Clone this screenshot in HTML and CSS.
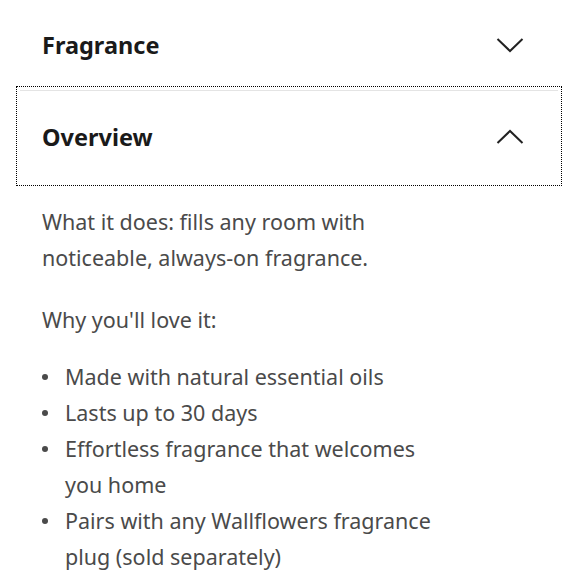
FILE: index.html
```html
<!DOCTYPE html>
<html lang="en">
<head>
<meta charset="utf-8">
<link rel="stylesheet" href="styles.css">
</head>
<body>
<div class="accordion">
  <div class="item">
    <div class="header">
      <span class="title">Fragrance</span>
      <svg class="chev" width="28" height="16" viewBox="0 0 28 16"><polyline points="1.5,2 14,14 26.5,2" fill="none" stroke="#222" stroke-width="2"/></svg>
    </div>
  </div>
  <div class="item focused">
    <div class="header">
      <span class="title">Overview</span>
      <svg class="chev" width="28" height="16" viewBox="0 0 28 16"><polyline points="1.5,14 14,2 26.5,14" fill="none" stroke="#222" stroke-width="2"/></svg>
    </div>
  </div>
  <div class="content">
    <p>What it does: fills any room with noticeable, always-on fragrance.</p>
    <p class="p2">Why you'll love it:</p>
    <ul class="list">
      <li>Made with natural essential oils</li>
      <li>Lasts up to 30 days</li>
      <li>Effortless fragrance that welcomes you home</li>
      <li>Pairs with any Wallflowers fragrance plug (sold separately)</li>
    </ul>
  </div>
</div>
</body>
</html>
```
FILE: styles.css
```css
html, body {
  margin: 0;
  padding: 0;
  background: #fff;
}
body {
  font-family: "Noto Sans", "Lato", sans-serif;
}
.accordion {
  margin-top: -2px;
  padding: 0 22px 0 20px;
}
.item {
  border-top: 1px solid #e4e4e4;
}
.item.focused {
  outline: 1px dotted #000;
  outline-offset: 3px;
}
.header {
  height: 91px;
  display: flex;
  align-items: center;
  justify-content: space-between;
  padding: 0 34px 0 22px;
}
.title {
  font-size: 23.5px;
  font-weight: 700;
  color: #1a1a1a;
}
.chev {
  display: block;
}
.content {
  padding: 22px 0 0 22px;
  color: #4a4a4a;
  font-size: 21.5px;
  line-height: 36px;
}
.content p {
  margin: 0;
  width: 380px;
}
.content .p2 {
  margin-top: 26px;
}
.list {
  list-style: none;
  margin: 21px 0 0;
  padding: 0;
  width: 403px;
}
.list li {
  position: relative;
  padding-left: 23px;
}
.list li::before {
  content: "";
  position: absolute;
  left: 0;
  top: 15px;
  width: 6px;
  height: 6px;
  border-radius: 50%;
  background: #4a4a4a;
}
```
